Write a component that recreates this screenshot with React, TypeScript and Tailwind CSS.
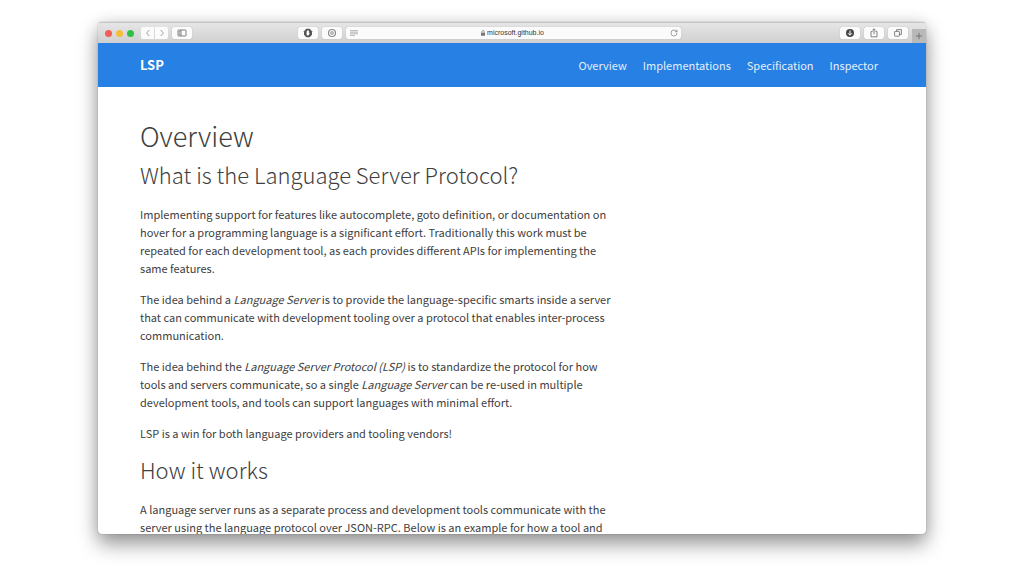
import type { ReactNode } from "react";
import { RotateCw } from "lucide-react";

const navLinks = ["Overview", "Implementations", "Specification", "Inspector"];

function ToolbarButton({ label, children }: { label: string; children: ReactNode }) {
  return (
    <button
      type="button"
      aria-label={label}
      className="flex h-3 w-5 items-center justify-center rounded-xs bg-[#fbfbfb] text-[#666] shadow-[0_0_1px_rgba(0,0,0,0.3)]"
    >
      {children}
    </button>
  );
}

function HistoryButton({ label, d }: { label: string; d: string }) {
  return (
    <button type="button" aria-label={label} className="flex h-3 w-[13px] items-center justify-center bg-[#fbfbfb]">
      <svg viewBox="0 0 8 8" className="size-2" fill="none" stroke="#888" strokeWidth="0.8">
        <path d={d} />
      </svg>
    </button>
  );
}

function BrowserBar() {
  return (
    <div className="flex h-[21px] shrink-0 items-center border-t border-[#c4c4c4] bg-linear-to-b from-[#e6e6e6] to-[#d0d0d0] pl-[7px]">
      <div className="flex items-center">
        <div className="flex gap-1">
          <span className="size-[7px] rounded-full bg-[#f25e57]" />
          <span className="size-[7px] rounded-full bg-[#f6bd3b]" />
          <span className="size-[7px] rounded-full bg-[#2fc146]" />
        </div>
        <div className="mr-1 ml-[7px] flex gap-px overflow-hidden rounded-xs">
          <HistoryButton label="Back" d="M5.3 1 2.6 4l2.7 3" />
          <HistoryButton label="Forward" d="M2.7 1 5.4 4 2.7 7" />
        </div>
        <ToolbarButton label="Show sidebar">
          <svg viewBox="0 0 10 8" className="h-2 w-[10px]" fill="none" stroke="currentColor" strokeWidth="0.8">
            <rect x="1" y="1" width="8" height="6" rx="0.5" />
            <path d="M4 1v6M1.8 2.6h1.4M1.8 4h1.4M1.8 5.4h1.4" />
          </svg>
        </ToolbarButton>
      </div>

      <div className="grow-2" />

      <div className="flex items-center gap-1">
        <ToolbarButton label="Content blocker">
          <svg viewBox="0 0 10 10" className="size-[10px]">
            <path d="M3.3.8h3.4L9 3.3v3.4L6.7 9.2H3.3L1 6.7V3.3z" fill="#555" />
            <path d="M3.6 4.8V3.2h.6v-.7h.6v-.3h.5v.3h.6v2.6l.4-.4.4.3-.8 2-.8.6H4.5l-.9-.9z" fill="#fff" />
          </svg>
        </ToolbarButton>
        <ToolbarButton label="Password manager">
          <svg viewBox="0 0 10 10" className="size-[10px]" fill="none" stroke="#8b8b8b">
            <circle cx="5" cy="5" r="3.5" strokeWidth="1.2" />
            <circle cx="5" cy="5" r="1.6" strokeWidth="0.6" />
            <path d="M5 3.8v2.4" strokeWidth="1" />
          </svg>
        </ToolbarButton>
        <div className="relative w-[335px]">
          <input
            aria-label="Address"
            defaultValue="microsoft.github.io"
            className="block h-3 w-full rounded-xs bg-[#fbfbfb] pl-1 text-center font-['Liberation_Sans',sans-serif] text-[7px] leading-3 text-[#333] shadow-[0_0_1px_rgba(0,0,0,0.3)] outline-none"
          />
          <svg viewBox="0 0 8 6" className="absolute top-[3px] left-1 h-[6px] w-2" stroke="#999" strokeWidth="0.7">
            <path d="M0 .6h8M0 2.2h8M0 3.8h8M0 5.4h5" />
          </svg>
          <svg viewBox="0 0 6 6" className="absolute top-[3px] left-[134px] size-[6px]">
            <path d="M1.8 3V1.8a1.2 1.2 0 0 1 2.4 0V3" fill="none" stroke="#777" strokeWidth="0.7" />
            <rect x="1" y="2.8" width="4" height="3" rx="0.3" fill="#777" />
          </svg>
          <RotateCw className="absolute top-[2px] right-[3px] size-2 text-[#777]" strokeWidth={2} />
        </div>
      </div>

      <div className="grow-3" />

      <div className="flex items-center gap-1 self-stretch">
        <ToolbarButton label="Downloads">
          <svg viewBox="0 0 10 10" className="size-[10px]">
            <circle cx="5" cy="5" r="4" fill="#444" />
            <path d="M5 2.5v4.6M3 5.2l2 2 2-2" fill="none" stroke="#fff" strokeWidth="1" />
          </svg>
        </ToolbarButton>
        <ToolbarButton label="Share">
          <svg viewBox="0 0 10 10" className="size-[10px]" fill="none" stroke="currentColor" strokeWidth="0.8">
            <path d="M3.6 3.6H2v5.2h6V3.6H6.4M5 6.2V.9M3.4 2.4 5 .8l1.6 1.6" />
          </svg>
        </ToolbarButton>
        <ToolbarButton label="Show tabs">
          <svg viewBox="0 0 10 10" className="size-[10px]" fill="none" stroke="currentColor" strokeWidth="0.8">
            <rect x="1.6" y="3.4" width="4.8" height="4.8" rx="0.5" />
            <path d="M3.6 3.4V1.6h4.8v4.8h-2" />
          </svg>
        </ToolbarButton>
        <button
          type="button"
          aria-label="New tab"
          className="flex h-[14px] w-[14px] items-center justify-center self-end bg-[#b9b9b9]"
        >
          <svg viewBox="0 0 8 8" className="size-2" stroke="#666" strokeWidth="0.8">
            <path d="M4 .8v6.4M.8 4h6.4" />
          </svg>
        </button>
      </div>
    </div>
  );
}

export default function App() {
  return (
    <div className="h-screen bg-white px-[98px] pt-[22px] pb-[42px] font-['Noto_Sans_CJK_SC',sans-serif] text-[#404040]">
      <div className="flex h-full flex-col overflow-hidden rounded-[4px] bg-white shadow-[0_0_1px_rgba(0,0,0,0.5),0_10px_20px_rgba(0,0,0,0.4),0_0_16px_rgba(0,0,0,0.1)]">
        <BrowserBar />
        <header className="flex h-11 shrink-0 items-center justify-between bg-[#2780e3] pr-12 pl-[42px] text-white">
          <a href="#" className="text-[13px] font-bold">
            LSP
          </a>
          <nav className="flex gap-4 text-[11px] leading-4">
            {navLinks.map((link) => (
              <a key={link} href="#" className="text-[#e4effb]">
                {link}
              </a>
            ))}
          </nav>
        </header>

        <main className="min-h-0 flex-1 overflow-hidden pt-[31px] pr-12 pl-[42px]">
          <article className="max-w-[480px] text-[11px] leading-[18px] [&_p]:mb-[13px]">
            <h1 className="mb-[2px] text-[27px] leading-9 font-light">Overview</h1>
            <h2 className="mb-[13px] text-[22px] leading-9 font-light">What is the Language Server Protocol?</h2>
            <p>
              Implementing support for features like autocomplete, goto definition, or documentation on hover for a
              programming language is a significant effort. Traditionally this work must be repeated for each
              development tool, as each provides different APIs for implementing the same features.
            </p>
            <p>
              The idea behind a <em>Language Server</em> is to provide the language-specific smarts inside a server that
              can communicate with development tooling over a protocol that enables inter-process communication.
            </p>
            <p>
              The idea behind the <em>Language Server Protocol (LSP)</em> is to standardize the protocol for how tools
              and servers communicate, so a single <em>Language Server</em> can be re-used in multiple development
              tools, and tools can support languages with minimal effort.
            </p>
            <p>LSP is a win for both language providers and tooling vendors!</p>
            <h2 className="-mt-1 mb-[13px] text-[22px] leading-9 font-light">How it works</h2>
            <p>
              A language server runs as a separate process and development tools communicate with the server using the
              language protocol over JSON-RPC. Below is an example for how a tool and
            </p>
          </article>
        </main>
      </div>
    </div>
  );
}
